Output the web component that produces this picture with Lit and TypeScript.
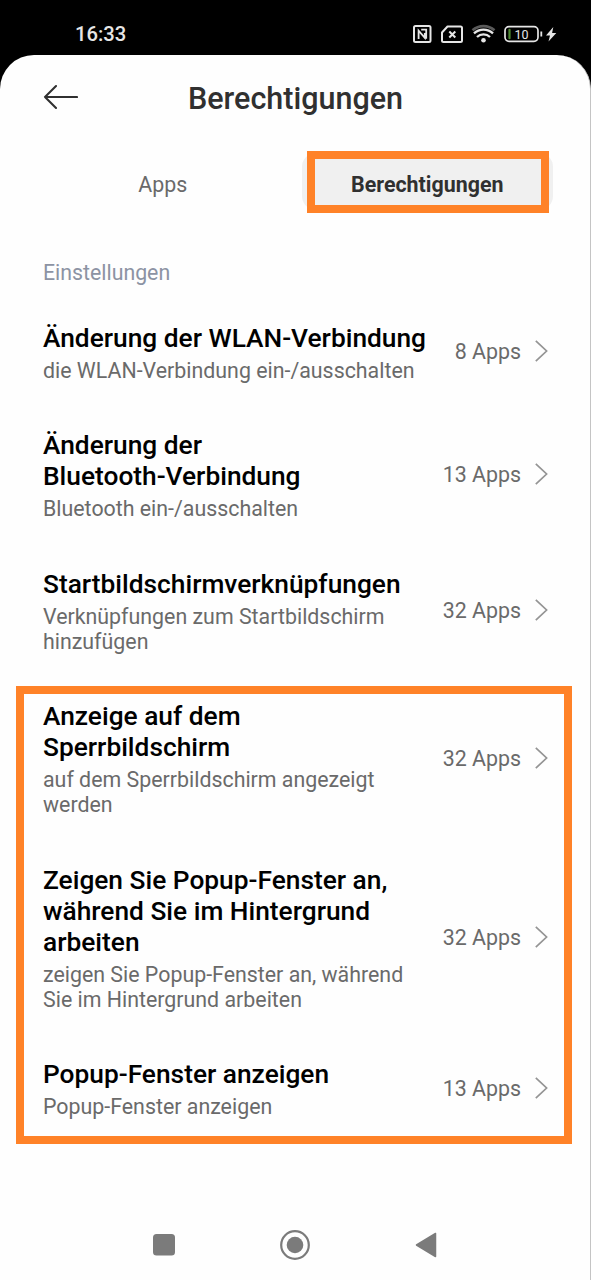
import { LitElement, html, css } from "lit";
import { customElement, property } from "lit/decorators.js";

@customElement("status-bar")
class StatusBar extends LitElement {
  static styles = css`
    :host { display: flex; justify-content: space-between; align-items: center; height: 55px; padding: 14px 34px 0 75px; box-sizing: border-box; background: #000; color: #e6e6e6; }
    .time { font-size: 20.2px; font-weight: 500; line-height: 41px; }
    .icons { width: 146px; height: 24px; margin-bottom: 1px; display: block; }
  `;
  render() {
    return html`
      <span class="time">16:33</span>
      <svg class="icons" viewBox="411 22 146 24" fill="none" stroke="#e6e6e6">
        <rect x="414" y="26" width="16.5" height="16" rx="1.5" stroke-width="2" />
        <path d="M418.6 39v-8.400l6.200 7.200v-4.800M421.200 29.700h5v9" stroke-width="1.800" />
        <path d="M447.5 26.500h13q1.500 0 1.500 1.500v12.500q0 1.500-1.500 1.500h-17q-1.500 0-1.500-1.500v-8z" stroke-width="2" stroke-linejoin="round" />
        <path d="M449.300 31.500l6 6M455.300 31.500l-6 6" stroke-width="2" />
        <path d="M472.500 30.300a16.500 16.500 0 0 1 22 0" stroke="#5a5a5a" stroke-width="2.600" />
        <path d="M474 33.400a13.600 13.600 0 0 1 19 0M477 37a9.300 9.300 0 0 1 13 0" stroke-width="2.300" />
        <circle cx="483.500" cy="40.300" r="2.300" fill="#e6e6e6" stroke="none" />
        <rect x="505" y="26.700" width="33" height="14.600" rx="4" stroke-width="1.700" />
        <path d="M509.500 29.800v8.400" stroke="#4e8a32" stroke-width="2.200" stroke-linecap="round" />
        <path d="M541.300 31.500v5" stroke-width="1.800" />
        <text x="521.500" y="38.600" text-anchor="middle" font-family="Roboto, sans-serif" font-size="12.500" font-weight="400" fill="#e6e6e6" stroke="none">10</text>
        <path d="M553.300 27l-7.300 8.500h4l-1.500 6 7.800-8.500h-4.200z" fill="#e6e6e6" stroke="none" />
      </svg>
    `;
  }
}

@customElement("permission-row")
class PermissionRow extends LitElement {
  @property({ attribute: false }) heading: string[] = [];
  @property({ attribute: false }) detail: string[] = [];
  @property({ type: Number }) count = 0;
  static styles = css`
    :host { display: flex; justify-content: space-between; align-items: center; }
    .text { display: flex; flex-direction: column; gap: 4px; white-space: nowrap; }
    .heading { color: #000; font-size: 26.3px; font-weight: 500; line-height: 31px; }
    .detail { color: #6a6a6a; font-size: 21.36px; line-height: 25px; }
    .line { display: block; }
    .more { display: flex; align-items: center; gap: 14px; color: #6a6a6a; font-size: 21.4px; margin-bottom: 1.500px; white-space: nowrap; }
    .chevron { width: 13px; height: 22px; display: block; margin-bottom: 1.500px; }
  `;
  render() {
    return html`
      <div class="text">
        <div class="heading">${this.heading.map((l) => html`<span class="line">${l}</span>`)}</div>
        <div class="detail">${this.detail.map((l) => html`<span class="line">${l}</span>`)}</div>
      </div>
      <div class="more">
        <span>${this.count} Apps</span>
        <svg class="chevron" viewBox="0 0 13 22" fill="none" stroke="#949494" stroke-width="1.700">
          <path d="M0.800 0.800L11.600 11 0.800 21.200" />
        </svg>
      </div>
    `;
  }
}

const ROWS = [
  { heading: ["Änderung der WLAN-Verbindung"], detail: ["die WLAN-Verbindung ein-/ausschalten"], count: 8 },
  { heading: ["Änderung der", "Bluetooth-Verbindung"], detail: ["Bluetooth ein-/ausschalten"], count: 13 },
  { heading: ["Startbildschirmverknüpfungen"], detail: ["Verknüpfungen zum Startbildschirm", "hinzufügen"], count: 32 },
];
const MARKED_ROWS = [
  { heading: ["Anzeige auf dem", "Sperrbildschirm"], detail: ["auf dem Sperrbildschirm angezeigt", "werden"], count: 32 },
  { heading: ["Zeigen Sie Popup-Fenster an,", "während Sie im Hintergrund", "arbeiten"], detail: ["zeigen Sie Popup-Fenster an, während", "Sie im Hintergrund arbeiten"], count: 32 },
  { heading: ["Popup-Fenster anzeigen"], detail: ["Popup-Fenster anzeigen"], count: 13 },
];

@customElement("app-root")
class AppRoot extends LitElement {
  static styles = css`
    :host { display: flex; flex-direction: column; width: 591px; height: 1280px; overflow: hidden; background: #000; font-family: Roboto, sans-serif; }
    .page { flex: 1; display: flex; flex-direction: column; background: #fefefe; border-radius: 34px 34px 0 0; border-right: 1px solid #c4c4c4; box-sizing: border-box; }
    .header { display: grid; grid-template-columns: 36px 1fr 36px; align-items: center; height: 88px; padding: 0 41px 0 42px; }
    .back { width: 36px; height: 26px; display: block; margin-bottom: 4px; }
    .title { margin: 0 0 2px; text-align: center; font-size: 30.5px; font-weight: 500; color: #303030; }
    .tabs { display: grid; grid-template-columns: 1fr 1fr; height: 57px; margin: 10px 37px 0 38px; }
    .tab { display: flex; align-items: center; justify-content: center; font-size: 21.4px; color: #6a6a6a; padding: 5px 8px 0 0; }
    .selected { position: relative; margin-left: 6px; padding-right: 0; border-radius: 14px; background: #f0f0f0; color: #303030; font-weight: 700; }
    .selected::after { content: ""; position: absolute; inset: -2px 4px -3px 5px; border: 8px solid #ff8228; }
    .section { margin: 51px 0 0 43px; font-size: 21.3px; line-height: 24px; color: #8c93a3; }
    .list { display: flex; flex-direction: column; gap: 47.500px; padding: 37.600px 42px 0 43px; }
    .marked { position: relative; display: flex; flex-direction: column; gap: 47.500px; }
    .marked::after { content: ""; position: absolute; inset: -15.100px -24px -24.900px -27px; border: 8px solid #ff8228; pointer-events: none; }
    .nav { margin-top: auto; height: 35px; padding: 0 153px 18px 152px; display: grid; grid-template-columns: 24px 1fr 22px; align-items: center; justify-items: center; }
    .nav svg { display: block; fill: #7b7b7b; }
  `;
  row(r: { heading: string[]; detail: string[]; count: number }) {
    return html`<permission-row .heading=${r.heading} .detail=${r.detail} .count=${r.count}></permission-row>`;
  }
  render() {
    return html`
      <status-bar></status-bar>
      <div class="page">
        <div class="header">
          <svg class="back" viewBox="0 0 36 26" fill="none" stroke="#303030" stroke-width="2.100" stroke-linecap="round" stroke-linejoin="round">
            <path d="M35 13H3M14 2L3 13l11 11" />
          </svg>
          <h1 class="title">Berechtigungen</h1>
        </div>
        <div class="tabs">
          <div class="tab">Apps</div>
          <div class="tab selected">Berechtigungen</div>
        </div>
        <div class="section">Einstellungen</div>
        <div class="list">
          ${ROWS.map((r) => this.row(r))}
          <div class="marked">${MARKED_ROWS.map((r) => this.row(r))}</div>
        </div>
        <div class="nav">
          <svg width="24" height="22" viewBox="0 0 24 22"><rect x="1" y="0" width="22" height="21.500" rx="3.500" /></svg>
          <svg width="32" height="30" viewBox="0 0 32 30"><circle cx="15" cy="15" r="13.800" fill="none" stroke="#7b7b7b" stroke-width="2.200" /><circle cx="15" cy="15" r="8.300" /></svg>
          <svg width="22" height="26" viewBox="0 0 22 26"><path d="M20.500 1.500v23L1.500 13z" stroke="#7b7b7b" stroke-width="1.500" stroke-linejoin="round" /></svg>
        </div>
      </div>
    `;
  }
}
